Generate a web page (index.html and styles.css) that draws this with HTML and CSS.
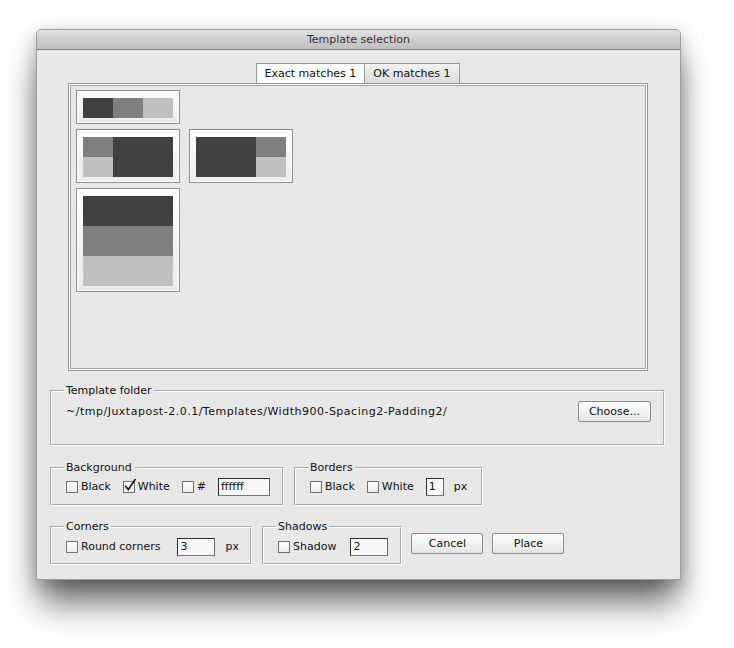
FILE: index.html
```html
<!DOCTYPE html>
<html lang="en">
<head>
    <meta charset="UTF-8">
    <meta name="viewport" content="width=device-width, initial-scale=1.0">
    <title>Template selection</title>
    <link rel="stylesheet" href="styles.css">
</head>
<body>
    <div class="desktop">
        <div class="window">
            <div class="titlebar">Template selection</div>

            <div class="content">
                <div class="tabs">
                    <div class="tab active">Exact matches 1</div>
                    <div class="tab">OK matches 1</div>
                </div>

                <div class="pane">
                    <div class="thumb-row">
                        <div class="thumb">
                            <div class="layout layout-strip">
                                <div class="dark"></div>
                                <div class="mid"></div>
                                <div class="light"></div>
                            </div>
                        </div>
                    </div>
                    <div class="thumb-row">
                        <div class="thumb">
                            <div class="layout layout-left">
                                <div class="mid"></div>
                                <div class="light"></div>
                                <div class="dark big"></div>
                            </div>
                        </div>
                        <div class="thumb">
                            <div class="layout layout-right">
                                <div class="dark big"></div>
                                <div class="mid"></div>
                                <div class="light"></div>
                            </div>
                        </div>
                    </div>
                    <div class="thumb-row">
                        <div class="thumb">
                            <div class="layout layout-stack">
                                <div class="dark"></div>
                                <div class="mid"></div>
                                <div class="light"></div>
                            </div>
                        </div>
                    </div>
                </div>

                <fieldset class="group folder">
                    <legend>Template folder</legend>
                    <span class="path">~/tmp/Juxtapost-2.0.1/Templates/Width900-Spacing2-Padding2/</span>
                    <button class="btn choose">Choose...</button>
                </fieldset>

                <div class="group-row">
                    <fieldset class="group background">
                        <legend>Background</legend>
                        <label class="check"><span class="box"></span>Black</label>
                        <label class="check"><span class="box">
                            <svg viewBox="0 0 14 14" width="14" height="14"><path d="M2.2 6.8 L5.3 10.6 L12.6 -0.2" fill="none" stroke="#1a1a1a" stroke-width="1.7"/></svg>
                        </span>White</label>
                        <label class="check"><span class="box"></span>#</label>
                        <span class="field hex">ffffff</span>
                    </fieldset>

                    <fieldset class="group borders">
                        <legend>Borders</legend>
                        <label class="check"><span class="box"></span>Black</label>
                        <label class="check"><span class="box"></span>White</label>
                        <span class="field small">1</span>
                        <span class="unit">px</span>
                    </fieldset>
                </div>

                <div class="group-row last">
                    <fieldset class="group corners">
                        <legend>Corners</legend>
                        <label class="check round"><span class="box"></span>Round corners</label>
                        <span class="field medium">3</span>
                        <span class="unit">px</span>
                    </fieldset>

                    <fieldset class="group shadows">
                        <legend>Shadows</legend>
                        <label class="check wide"><span class="box"></span>Shadow</label>
                        <span class="field medium">2</span>
                    </fieldset>

                    <div class="actions">
                        <button class="btn">Cancel</button>
                        <button class="btn">Place</button>
                    </div>
                </div>
            </div>
        </div>
    </div>
</body>
</html>
```

FILE: styles.css
```css
:root {
    --window: #e8e8e8;
    --text: #111;
    --dark: #404040;
    --mid: #7f7f7f;
    --light: #c0c0c0;
}

body {
    margin: 0;
    background: #fff;
    font-family: "DejaVu Sans", sans-serif;
    font-size: 11px;
    line-height: 14px;
    color: var(--text);
}

.desktop {
    min-height: 648px;
    box-sizing: border-box;
    padding: 29px 0 0 36px;
}

.window {
    width: 645px;
    box-sizing: border-box;
    background: var(--window);
    border: 1px solid #9d9d9d;
    border-radius: 5px 5px 2px 2px;
    box-shadow: 0 26px 34px -4px rgba(0, 0, 0, 0.6), 0 4px 18px rgba(0, 0, 0, 0.22);
}

.titlebar {
    height: 19px;
    line-height: 19px;
    text-align: center;
    color: #333;
    background: linear-gradient(#e2e2e2, #cbcbcb 60%, #bfbfbf);
    border-bottom: 1px solid #7d7d7d;
    border-radius: 4px 4px 0 0;
}

.content {
    padding: 13px 15px 14px 13px;
}

/* tabs */
.tabs {
    display: flex;
    justify-content: center;
}

.tab {
    height: 19px;
    line-height: 19px;
    padding: 0 8px;
    border: 1px solid #999;
    border-bottom: none;
    background: linear-gradient(#f3f3f3, #dcdcdc);
}

.tab + .tab {
    border-left: none;
}

.tab.active {
    background: #fff;
}

.pane {
    height: 288px;
    box-sizing: border-box;
    margin: 0 17px 0 18px;
    padding: 6px 7px;
    border: 1px solid #999;
    box-shadow: inset 0 0 0 1px #f5f5f5, inset 0 0 0 2px #a9a9a9;
    display: flex;
    flex-direction: column;
    gap: 5px;
}

.thumb-row {
    display: flex;
    gap: 9px;
}

.thumb {
    padding: 7px 6px 5px;
    border: 1px solid #8f8f8f;
    background: linear-gradient(#fefefe, #ececec);
    box-shadow: inset 0 0 0 1px #fff;
}

.layout {
    display: grid;
}

.layout-strip {
    grid-template-columns: 30px 30px 30px;
    grid-template-rows: 20px;
}

.layout-left {
    grid-template-columns: 30px 60px;
    grid-template-rows: 20px 20px;
}

.layout-left .big {
    grid-column: 2;
    grid-row: 1 / 3;
}

.layout-right {
    grid-template-columns: 60px 30px;
    grid-template-rows: 20px 20px;
}

.layout-right .big {
    grid-row: 1 / 3;
}

.layout-stack {
    grid-template-columns: 90px;
    grid-template-rows: 30px 30px 30px;
}

.dark { background: var(--dark); }
.mid { background: var(--mid); }
.light { background: var(--light); }

/* grouped options */
.group {
    margin: 0;
    padding: 3px 12px 8px 14px;
    border: 2px groove #fff;
    box-sizing: border-box;
    display: flex;
    align-items: center;
}

.group legend {
    padding: 0 2px;
    margin-left: -2px;
    line-height: 14px;
}

.folder {
    margin-top: 13px;
    padding-bottom: 22px;
}

.folder .path {
    flex: 1;
    letter-spacing: 0.5px;
}

.group-row {
    display: flex;
    gap: 10px;
    margin-top: 15px;
}

.group-row.last {
    margin-top: 14px;
    align-items: flex-start;
}

.background { width: 234px; }
.borders { width: 189px; }
.corners { width: 202px; padding: 4px 0 7px 14px; }
.shadows { width: 139px; padding-top: 4px; padding-bottom: 7px; }

.check {
    display: flex;
    align-items: center;
    flex-shrink: 0;
    white-space: nowrap;
    margin-right: 12px;
}

.check.wide {
    margin-right: 14px;
}

.check.round {
    margin-right: 17px;
}

.box {
    position: relative;
    width: 10px;
    height: 10px;
    margin-right: 3px;
    border: 1px solid #727272;
    background: linear-gradient(#fff, #ececec);
    box-shadow: inset 0 1px 0 #fff;
}

.box svg {
    position: absolute;
    left: -1px;
    top: -3px;
}

.field {
    flex-shrink: 0;
    height: 16px;
    line-height: 16px;
    padding: 0 2px;
    border: 1px solid #444;
    border-color: #2e2e2e #666 #777 #2e2e2e;
    background: #f8f8f8;
}

.field.hex { width: 46px; }
.field.small { width: 12px; }
.field.medium { width: 32px; }

.unit {
    margin-left: 10px;
}

/* buttons */
.btn {
    height: 21px;
    padding: 0;
    font-family: inherit;
    font-size: 11px;
    color: var(--text);
    border: 1px solid #8c8c8c;
    border-radius: 2px;
    background: linear-gradient(#fff, #f3f3f3 50%, #e4e4e4);
}

.choose {
    width: 73px;
}

.actions {
    display: flex;
    gap: 9px;
    margin-top: 13px;
    margin-left: -1px;
}

.actions .btn {
    width: 72px;
}
```
